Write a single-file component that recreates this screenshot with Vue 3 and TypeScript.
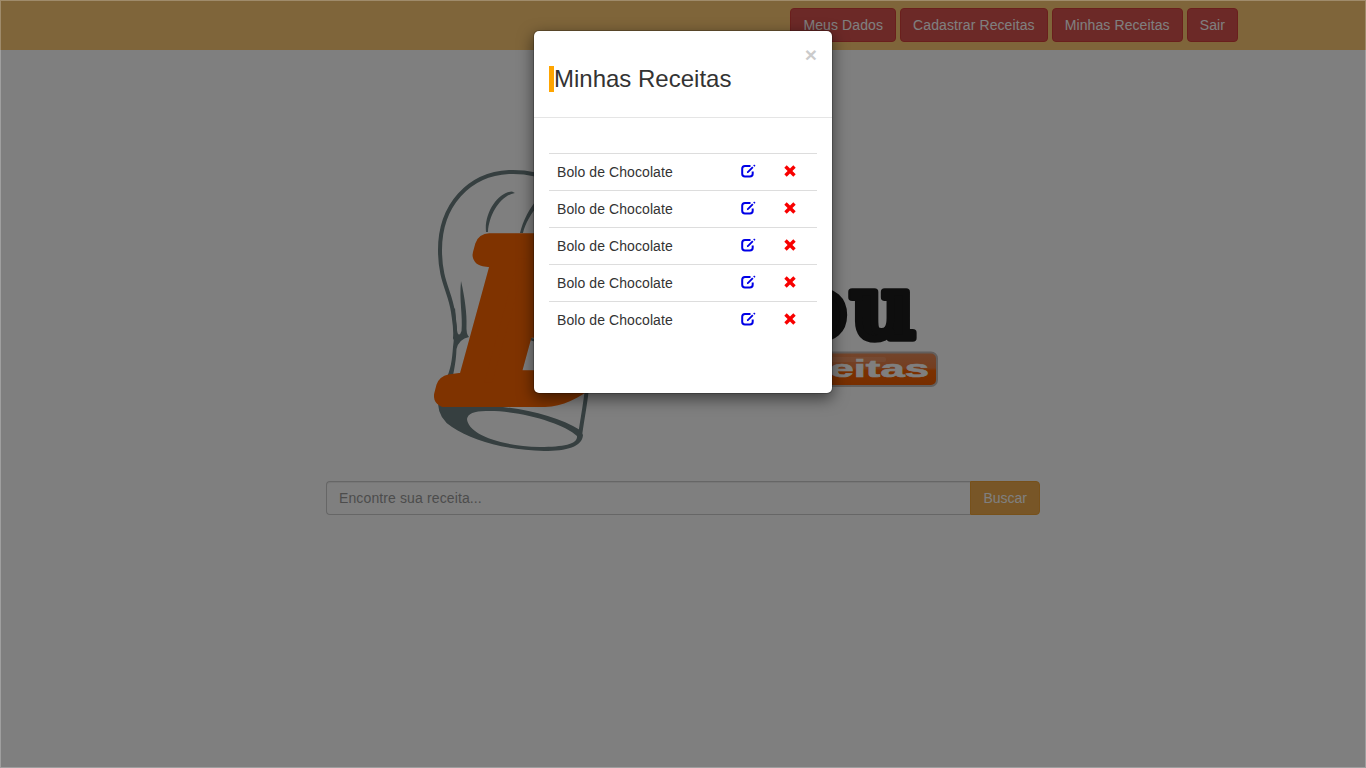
<script setup lang="ts">
import { ref } from 'vue'

interface Recipe {
  id: number
  name: string
}

const menu: string[] = ['Meus Dados', 'Cadastrar Receitas', 'Minhas Receitas', 'Sair']
const recipes = ref<Recipe[]>(
  [1, 2, 3, 4, 5].map((id) => ({ id, name: 'Bolo de Chocolate' })),
)
const query = ref('')

function removeRecipe(id: number) {
  recipes.value = recipes.value.filter((r) => r.id !== id)
}
</script>

<template>
  <div class="page">
    <header class="navbar">
      <button v-for="item in menu" :key="item" class="btn btn-danger">{{ item }}</button>
    </header>

    <main class="content">
      <svg class="logo" viewBox="420 160 530 300" width="530" height="300">
        <defs>
          <linearGradient id="plate" x1="0" y1="0" x2="0" y2="1">
            <stop offset="0" stop-color="#e58a58" />
            <stop offset="0.46" stop-color="#ea7c40" />
            <stop offset="0.54" stop-color="#f86200" />
            <stop offset="1" stop-color="#ee5c00" />
          </linearGradient>
          <clipPath id="soft-corner">
            <path d="M420 220H640V340C610 375 580 406 545 407H420Z" />
          </clipPath>
        </defs>
        <!-- chef hat -->
        <g fill="none" stroke="#6c7f80" stroke-linecap="round">
          <path stroke-width="4" d="M550 181C538 173 524 171.500 509 172C469 174 440 205 440 250C440 281 450 291 453 312C454 320 456 328 455 338" />
          <path stroke-width="4" d="M587 388C585 407 582 420 580 436" />
          <path stroke-width="2.500" d="M521 334Q529 340 540 341" />
        </g>
        <g fill="#6c7f80">
          <path d="M453 310L455 308C456 318 456 327 457.500 333Q459.500 337 461.500 331C463 316 459 300 461 281C465 298 467 315 466.500 325Q466 334 469 337Q459 339 456.500 349C456 364 453 375 450 390L445 381C451 370 452 360 453 347C455 333 454 322 453 310Z" />
          <path d="M486 232C484 213 498 192 512 191.500L515 193C501 195 489 214 488 232Z" />
          <path d="M520 233C523 221 529 208 540 196L540 203C531 213 525 224 523 233Z" />
          <path fill-rule="evenodd" d="M438 404C445 409 456 406 482 406C518 406 557 416 580 430L583 435C582 447 567 451 544 451C505 450 473 441 452 427Q439 419 438 404ZM467 419C468 433 497 446 540 447C564 447 578 444 577 436C564 423 518 410 486 411Q468 411 467 419Z" />
        </g>
        <g clip-path="url(#soft-corner)">
          <g transform="translate(449 394.500)">
            <text class="initial" transform="skewX(-5) scale(1.06 1)">E</text>
          </g>
        </g>
        <g transform="translate(919 337.500)">
          <text class="wordmark" text-anchor="end" transform="scale(1.03 1)">ou</text>
        </g>
        <rect x="700" y="352.500" width="237" height="33.500" rx="6" fill="url(#plate)" stroke="#c4bcb8" stroke-width="2" />
        <rect x="740" y="357" width="146" height="5" rx="2" fill="#ffffff" opacity="0.12" />
        <g transform="translate(929 377)">
          <text class="tagline" text-anchor="end" transform="scale(1.82 1)">receitas</text>
        </g>
      </svg>

      <form class="search" @submit.prevent>
        <input v-model="query" class="field" type="text" placeholder="Encontre sua receita..." />
        <button class="btn btn-search">Buscar</button>
      </form>
    </main>

    <div class="backdrop">
      <section class="modal" role="dialog" aria-label="Minhas Receitas">
        <div class="modal-header">
          <h3 class="title">Minhas Receitas</h3>
          <button class="close" aria-label="Fechar">×</button>
        </div>
        <div class="modal-body">
          <div v-for="recipe in recipes" :key="recipe.id" class="row">
            <span class="name">{{ recipe.name }}</span>
            <svg class="edit" viewBox="0 0 15 14" width="15" height="14">
              <path d="M9.500 2H4Q1.200 2 1.200 4.800V9.700Q1.200 12.500 4 12.500H8.900Q11.700 12.500 11.700 9.700V7.500" fill="none" stroke="#0000e6" stroke-width="2" />
              <path d="M5.800 9.200L6.200 7.400L11.200 2.400L12.500 3.700L7.500 8.700Z" fill="#0000e6" />
              <path d="M12.200 1.400L13.200 .5L14.500 1.800L13.500 2.700Z" fill="#0000e6" />
            </svg>
            <svg class="remove" viewBox="0 0 12 12" width="12" height="12" @click="removeRecipe(recipe.id)">
              <path d="M2.700 .3L6 3.600L9.300 .3L11.700 2.700L8.400 6L11.700 9.300L9.300 11.700L6 8.400L2.700 11.700L.3 9.300L3.600 6L.3 2.700Z" fill="#f80000" />
            </svg>
          </div>
        </div>
      </section>
    </div>
  </div>
</template>

<style>
body {
  margin: 0;
  overflow: hidden;
}
</style>

<style scoped>
.page {
  position: relative;
  box-sizing: border-box;
  width: 100vw;
  height: 100vh;
  overflow: hidden;
  background: #fff;
  color: #333;
  font: 14px/20px "Liberation Sans", Arial, sans-serif;
}
.navbar {
  box-sizing: border-box;
  display: flex;
  justify-content: flex-end;
  gap: 4px;
  height: 50px;
  padding: 8px 128px 8px 0;
  background: #ffcb74;
}
.btn {
  box-sizing: border-box;
  height: 34px;
  padding: 6px 12px;
  border: 1px solid;
  border-radius: 4px;
  color: #fff;
  font: inherit;
  white-space: nowrap;
}
.btn-danger {
  background: #d9534f;
  border-color: #d43f3a;
  letter-spacing: 0.1px;
}
.content {
  display: flex;
  flex-direction: column;
  padding-top: 110px;
}
.logo {
  display: block;
  margin-left: 420px;
}
.initial {
  font: italic bold 228px "Liberation Serif", serif;
  fill: #ff6600;
  stroke: #ff6600;
  stroke-width: 25px;
  stroke-linejoin: round;
}
.wordmark {
  font: bold 88px "DejaVu Serif", serif;
  letter-spacing: 3px;
  fill: #1c1c1c;
  stroke: #1c1c1c;
  stroke-width: 7.5px;
  stroke-linejoin: round;
}
.tagline {
  font: bold 24px "Liberation Sans", Arial, sans-serif;
  fill: #fff;
  stroke: #fff;
  stroke-width: 0.6px;
}
.search {
  display: flex;
  width: 714px;
  margin: 21px 0 0 326px;
}
.field {
  box-sizing: border-box;
  flex: 1;
  height: 34px;
  padding: 6px 12px;
  border: 1px solid #ccc;
  border-right: 0;
  border-radius: 4px 0 0 4px;
  box-shadow: inset 0 1px 1px rgba(0, 0, 0, 0.075);
  background: #fff;
  font: inherit;
  letter-spacing: 0.12px;
  color: #555;
}
.field::placeholder {
  color: #999;
  opacity: 1;
}
.btn-search {
  background: #f0ad4e;
  border-color: #eea236;
  border-radius: 0 4px 4px 0;
}
.backdrop {
  position: absolute;
  inset: 0;
  box-sizing: border-box;
  display: flex;
  justify-content: center;
  align-items: flex-start;
  padding-top: 29px;
  border: 1px solid rgba(255, 255, 255, 0.25);
  background: rgba(0, 0, 0, 0.5);
}
.modal {
  box-sizing: border-box;
  width: 300px;
  height: 364px;
  border: 1px solid rgba(0, 0, 0, 0.2);
  border-radius: 6px;
  background: #fff;
  background-clip: padding-box;
  box-shadow: 0 5px 15px rgba(0, 0, 0, 0.5);
}
.modal-header {
  box-sizing: border-box;
  display: flex;
  justify-content: space-between;
  align-items: flex-start;
  height: 87px;
  padding: 15px;
  border-bottom: 1px solid #e5e5e5;
}
.title {
  margin: 20px 0 0;
  border-left: 5px solid #ffa500;
  font-size: 24px;
  font-weight: 500;
  line-height: 26px;
}
.close {
  margin: -2px 0 0;
  padding: 0;
  border: 0;
  background: none;
  color: #000;
  opacity: 0.2;
  font: bold 21px/21px "Liberation Sans", Arial, sans-serif;
  text-shadow: 0 1px 0 #fff;
}
.modal-body {
  padding: 35px 15px 0;
}
.row {
  box-sizing: border-box;
  display: flex;
  align-items: flex-start;
  height: 37px;
  padding: 8px;
  border-top: 1px solid #ddd;
}
.name {
  width: 184px;
  letter-spacing: 0.08px;
}
.edit {
  margin-top: 2px;
}
.remove {
  margin: 3px 0 0 28px;
}
</style>
